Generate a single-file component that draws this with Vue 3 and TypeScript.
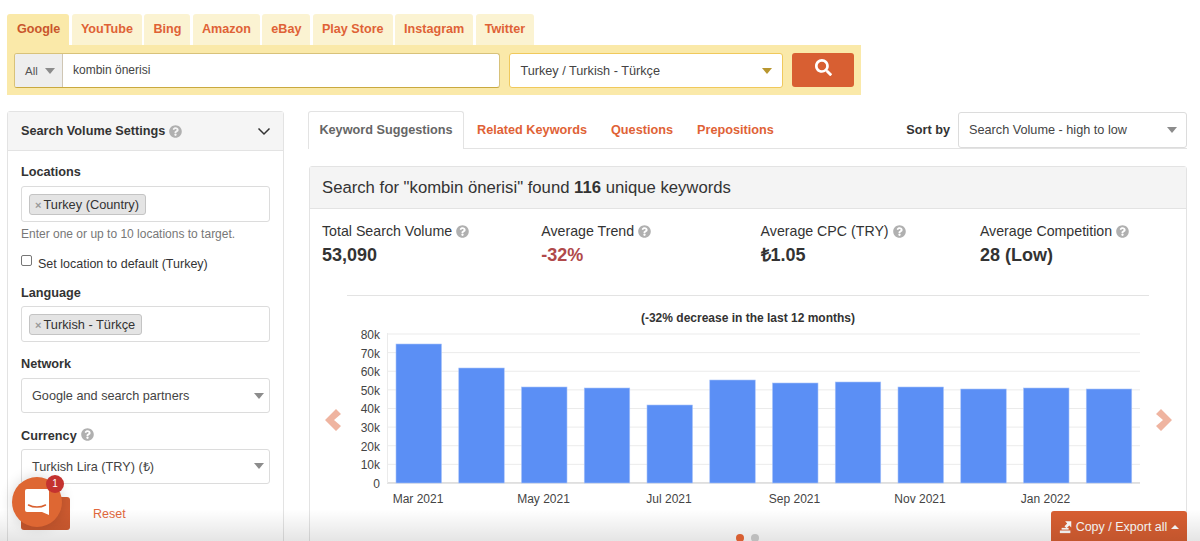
<template>
  <div class="page">
    <!-- Search box -->
    <div class="search-tabs">
      <a v-for="(t, i) in engines" :key="t" class="engine" :class="{ active: i === 0 }">{{ t }}</a>
    </div>
    <div class="search-bar">
      <div class="query-group">
        <span class="query-type">All <i class="caret caret-grey"></i></span>
        <span class="query-text">kombin önerisi</span>
      </div>
      <div class="lang-select">
        <span>Turkey / Turkish - Türkçe</span>
        <i class="caret caret-gold"></i>
      </div>
      <button class="search-btn">
        <svg width="17" height="17" viewBox="0 0 512 512" fill="#fff"><path :d="searchPath" /></svg>
      </button>
    </div>

    <div class="columns">
      <!-- Settings sidebar -->
      <aside class="settings">
        <div class="settings-head">
          <span>Search Volume Settings</span>
          <svg class="help" width="13" height="13" viewBox="0 0 512 512"><path :d="helpPath" /></svg>
          <svg class="chevron" width="14" height="9" viewBox="0 0 14 9" fill="none" stroke="#333" stroke-width="1.5"><polyline points="1.5,1.5 7,7 12.5,1.5" /></svg>
        </div>
        <div class="settings-body">
          <label class="field-label first">Locations</label>
          <div class="tag-input"><span class="tag"><b>×</b>Turkey (Country)</span></div>
          <p class="hint">Enter one or up to 10 locations to target.</p>
          <div class="check-row"><span class="checkbox"></span><span>Set location to default (Turkey)</span></div>
          <label class="field-label lang-label">Language</label>
          <div class="tag-input lang-input"><span class="tag"><b>×</b>Turkish - Türkçe</span></div>
          <label class="field-label net-label">Network</label>
          <div class="select side-select">Google and search partners<i class="caret caret-grey"></i></div>
          <label class="field-label cur-label">Currency <svg class="help" width="13" height="13" viewBox="0 0 512 512"><path :d="helpPath" /></svg></label>
          <div class="select side-select">Turkish Lira (TRY) (₺)<i class="caret caret-grey"></i></div>
          <div class="actions">
            <span class="apply"></span>
            <a class="reset">Reset</a>
          </div>
        </div>
      </aside>

      <main class="results">
        <div class="result-tabs">
          <a v-for="(t, i) in resultTabs" :key="t" class="result-tab" :class="{ active: i === 0 }">{{ t }}</a>
          <div class="sort">
            <strong>Sort by</strong>
            <div class="select sort-select">Search Volume - high to low<i class="caret caret-grey"></i></div>
          </div>
        </div>

        <section class="card">
          <div class="card-head">Search for "kombin önerisi" found <b>116</b> unique keywords</div>
          <div class="stats">
            <div v-for="s in stats" :key="s.label" class="stat">
              <div class="stat-label">
                {{ s.label }}
                <svg class="help" width="13" height="13" viewBox="0 0 512 512"><path :d="helpPath" /></svg>
              </div>
              <div class="stat-value" :class="{ down: s.down }">{{ s.value }}</div>
            </div>
          </div>
          <div class="chart-wrap">
            <div class="chart-title">(-32% decrease in the last 12 months)</div>
            <div class="chart-row">
              <svg class="arrow" width="16" height="22" viewBox="0 0 16 22"><polygon points="11,0 16,5 9,11 16,17 11,22 0,11" /></svg>
              <svg class="chart" width="810" height="180" viewBox="0 0 810 180">
                <g v-for="(g, i) in gridLines" :key="g">
                  <line :x1="41" :x2="794" :y1="g" :y2="g" :stroke="i === 8 ? '#c4c4c4' : '#ebebeb'" stroke-width="1" />
                  <text x="34" :y="g + 5" text-anchor="end" class="tick">{{ i === 8 ? '0' : (80 - i * 10) + 'k' }}</text>
                </g>
                <line x1="41.5" x2="41.5" y1="7" y2="157" stroke="#ebebeb" />
                <rect v-for="b in bars" :key="b.x" :x="b.x" :y="b.y" width="45.5" :height="b.h" fill="#5b8ff5" stroke="#a9c4f9" stroke-width="0.6" />
                <text v-for="m in months" :key="m.label" :x="m.x" y="177" text-anchor="middle" class="tick">{{ m.label }}</text>
              </svg>
              <svg class="arrow" width="16" height="22" viewBox="0 0 16 22"><polygon points="5,0 16,11 5,22 0,17 7,11 0,5" /></svg>
            </div>
          </div>
        </section>
      </main>
    </div>

    <!-- Things floating over the page -->
    <div class="fade"></div>
    <div class="pager"><span class="on"></span><span></span></div>
    <button class="export">
      <svg width="14" height="14" viewBox="0 0 16 15" fill="#fff">
        <rect x="1" y="11.5" width="12" height="3" />
        <rect x="3" y="8.5" width="8" height="2" />
        <path d="M7 1h7v7l-2.2-2.2L8.6 9 6.2 6.6 9.400 3.400z" />
      </svg>
      Copy / Export all <i class="caret caret-up"></i>
    </button>
    <div class="chat">
      <svg width="24" height="26" viewBox="0 0 24 26">
        <path d="M2 0h20a2 2 0 0 1 2 2v24l-7-3H2a2 2 0 0 1-2-2V2a2 2 0 0 1 2-2z" fill="#fff" />
        <path d="M3.500 16c5 2.800 12 2.800 17 0" fill="none" stroke="#d9602f" stroke-width="1.500" stroke-linecap="round" />
      </svg>
      <span class="chat-badge">1</span>
    </div>
  </div>
</template>

<script setup lang="ts">
const engines = ['Google', 'YouTube', 'Bing', 'Amazon', 'eBay', 'Play Store', 'Instagram', 'Twitter']
const resultTabs = ['Keyword Suggestions', 'Related Keywords', 'Questions', 'Prepositions']

const stats = [
  { label: 'Total Search Volume', value: '53,090', down: false },
  { label: 'Average Trend', value: '-32%', down: true },
  { label: 'Average CPC (TRY)', value: '₺1.05', down: false },
  { label: 'Average Competition', value: '28 (Low)', down: false },
]

const helpPath =
  'M504 256c0 136.997-111.043 248-248 248S8 392.997 8 256C8 119.083 119.043 8 256 8s248 111.083 248 248zM262.655 90c-54.497 0-89.255 22.957-116.549 63.758-3.536 5.286-2.353 12.415 2.715 16.258l34.699 26.31c5.205 3.947 12.621 3.008 16.665-2.122 17.864-22.658 30.113-35.797 57.303-35.797 20.429 0 45.698 13.148 45.698 32.958 0 14.976-12.363 22.667-32.534 33.976C247.128 238.528 216 254.941 216 296v4c0 6.627 5.373 12 12 12h56c6.627 0 12-5.373 12-12v-1.333c0-28.462 83.186-29.647 83.186-106.667 0-58.002-60.165-102-116.531-102zM256 338c-25.365 0-46 20.635-46 46 0 25.364 20.635 46 46 46s46-20.636 46-46c0-25.365-20.635-46-46-46z'
const searchPath =
  'M505 442.7L405.3 343c-4.5-4.5-10.6-7-17-7H372c27.6-35.3 44-79.7 44-128C416 93.1 322.9 0 208 0S0 93.1 0 208s93.1 208 208 208c48.3 0 92.7-16.4 128-44v16.3c0 6.4 2.5 12.5 7 17l99.7 99.7c9.4 9.4 24.6 9.4 33.9 0l28.3-28.3c9.4-9.4 9.4-24.6.1-34zM208 336c-70.7 0-128-57.2-128-128 0-70.7 57.2-128 128-128 70.7 0 128 57.2 128 128 0 70.7-57.2 128-128 128z'

// chart geometry: y=157 is zero, 18.62px for each 10k
const gridLines = Array.from({ length: 9 }, (_, i) => 8 + i * 18.62)
const tops = [18, 42, 61, 62, 79, 54, 57, 56, 61, 63, 62, 63]
const bars = tops.map((y, i) => ({ x: 50 + i * 62.75, y, h: 157 - y }))
const months = ['Mar 2021', 'May 2021', 'Jul 2021', 'Sep 2021', 'Nov 2021', 'Jan 2022'].map((label, i) => ({
  label,
  x: 72 + i * 125.5,
}))
</script>

<style scoped>
.page {
  position: relative;
  width: 1200px;
  height: 541px;
  overflow: hidden;
  background: #fff;
  color: #333;
  font-family: "Liberation Sans", Arial, sans-serif;
  font-size: 13px;
  padding-top: 14px;
  box-sizing: border-box;
}

.search-tabs { display: flex; gap: 2.500px; margin-left: 7px; height: 31px; }
.engine {
  padding: 0 9px;
  line-height: 31px;
  background: #fbf3d2;
  color: #df6236;
  font-size: 12.600px;
  font-weight: bold;
  border-radius: 3px 3px 0 0;
}
.engine.active { background: #fae9a9; color: #c9562c; padding: 0 9px 0 10px; }

.search-bar {
  display: flex;
  width: 854px;
  height: 50px;
  margin-left: 7px;
  padding: 8px 7px 0 7px;
  box-sizing: border-box;
  background: #fae9a9;
  align-items: flex-start;
}
.query-group {
  display: flex;
  width: 487px;
  height: 35px;
  box-sizing: border-box;
  background: #fff;
  border: 1px solid #d8c27a;
  border-bottom-color: #c9a93f;
  border-radius: 3px;
  overflow: hidden;
  font-size: 12px;
}
.query-type {
  display: flex;
  align-items: center;
  gap: 7px;
  width: 48px;
  padding-left: 10px;
  box-sizing: border-box;
  background: #eee;
  border-right: 1px solid #cfc6b4;
  color: #555;
  font-size: 11.500px;
}
.query-text { line-height: 33px; padding-left: 10px; color: #444; }

.lang-select {
  display: flex;
  align-items: center;
  justify-content: space-between;
  width: 274px;
  height: 35px;
  margin-left: 9px;
  padding: 0 10px;
  box-sizing: border-box;
  background: #fff;
  border: 1px solid #f0c95c;
  border-radius: 3px;
  font-size: 12.700px;
  color: #444;
}
.search-btn {
  width: 62px;
  height: 34px;
  margin-left: 9px;
  padding: 0 0 2px;
  background: #d85f32;
  border: 0;
  border-radius: 3px;
}

.caret { display: inline-block; width: 0; height: 0; border-style: solid; border-color: transparent; border-width: 6px 5.500px 0; }
.caret-grey { border-top-color: #8c8c8c; }
.caret-gold { border-top-color: #b8962f; }
.caret-up { border-width: 0 4px 4px; border-bottom-color: #fff; margin-left: 1px; }

.columns { display: flex; align-items: flex-start; margin-top: 16px; }

/* Sidebar */
.settings {
  width: 277px;
  height: 460px;
  margin-left: 7px;
  box-sizing: border-box;
  border: 1px solid #e3e3e3;
  border-radius: 3px 3px 0 0;
}
.settings-head {
  display: flex;
  align-items: center;
  height: 38px;
  padding: 0 12px 0 13px;
  background: #f5f5f5;
  border-bottom: 1px solid #e3e3e3;
  font-size: 12.700px;
  font-weight: bold;
}
.settings-head .help { margin-left: 4px; }
.chevron { margin-left: auto; }
.help { fill: #b0b0b0; vertical-align: -1.500px; }

.settings-body { padding: 0 13px; }
.field-label { display: block; font-size: 12.700px; font-weight: bold; line-height: 14px; }
.first { margin-top: 14px; }
.lang-label { margin-top: 14px; }
.net-label { margin-top: 15px; }
.cur-label { margin-top: 15px; }
.cur-label .help { margin-left: 1px; }
.tag-input {
  height: 36px;
  width: 249px;
  margin-top: 7px;
  padding: 7px;
  box-sizing: border-box;
  border: 1px solid #dcdcdc;
  border-radius: 3px;
}
.lang-input { margin-top: 6px; }
.tag {
  display: inline-block;
  height: 21px;
  line-height: 20px;
  padding: 0 6px 0 5px;
  box-sizing: border-box;
  background: #e4e4e4;
  border: 1px solid #c4c4c4;
  border-radius: 3px;
  font-size: 12.800px;
}
.tag b { color: #999; margin-right: 2px; font-size: 11px; }
.hint { margin: 5px 0 0; font-size: 12px; line-height: 14px; color: #777; }
.check-row { display: flex; font-size: 12.500px; line-height: 15px; margin-top: 16px; gap: 6px; height: 15px; }
.checkbox {
  width: 11px;
  height: 11px;
  box-sizing: border-box;
  border: 1px solid #767676;
  border-radius: 2px;
  margin-top: -2px;
  flex-shrink: 0;
}
.select {
  display: flex;
  align-items: center;
  justify-content: space-between;
  box-sizing: border-box;
  border: 1px solid #dcdcdc;
  border-radius: 3px;
  background: #fff;
  color: #444;
  font-size: 12.700px;
}
.side-select { width: 249px; height: 35px; margin-top: 7px; padding: 0 5px 0 10px; }
.cur-label + .side-select { margin-top: 6px; }
.actions { display: flex; align-items: center; margin-top: 13px; }
.apply { width: 49px; height: 33px; background: #cf5b30; border-radius: 3px; }
.reset { margin-left: 23px; padding-top: 1px; color: #e2673c; font-size: 12.500px; }

/* Results */
.results { width: 878px; margin-left: 25px; }
.result-tabs {
  display: flex;
  align-items: flex-end;
  height: 37px;
  border-bottom: 1px solid #e3e3e3;
  position: relative;
  font-size: 12.700px;
  font-weight: bold;
}
.result-tab {
  color: #df6236;
  line-height: 36px;
  margin-left: 24px;
}
.result-tab.active {
  width: 156px;
  height: 38px;
  margin: 0 -11px -1px -1px;
  box-sizing: border-box;
  text-align: center;
  line-height: 37px;
  color: #666;
  background: #fff;
  border: 1px solid #e3e3e3;
  border-bottom: 0;
  border-radius: 3px 3px 0 0;
}
.sort { display: flex; align-items: center; gap: 8px; margin-left: auto; height: 37px; color: #333; }
.sort strong { font-size: 12.700px; }
.sort-select { width: 229px; height: 36px; font-weight: normal; padding: 0 9px 0 10px; }

.card {
  margin-top: 17px;
  width: 878px;
  height: 400px;
  box-sizing: border-box;
  border: 1px solid #e3e3e3;
  border-radius: 3px 3px 0 0;
}
.card-head {
  height: 41px;
  line-height: 41px;
  padding-left: 12px;
  background: #f4f4f4;
  border-bottom: 1px solid #e3e3e3;
  font-size: 16.700px;
}
.stats { display: grid; grid-template-columns: repeat(4, 219.300px); padding: 14px 0 0 12px; height: 72px; box-sizing: content-box; }
.stat-label { font-size: 14.200px; line-height: 17px; }
.stat-value { font-size: 18px; font-weight: bold; line-height: 22px; margin-top: 4px; }
.stat-value.down { color: #b0494a; }

.chart-wrap { margin: 0 37px; border-top: 1px solid #e3e3e3; }
.chart-title { margin-top: 15px; text-align: center; font-size: 12px; font-weight: bold; line-height: 14px; }
.chart-row { display: flex; align-items: center; margin: 1px -22px 0; }
.chart { margin-left: 5px; flex-shrink: 0; }
.arrow { fill: #efb4a0; flex-shrink: 0; margin-top: 8px; }
.tick { font-size: 12px; fill: #444; font-family: "Liberation Sans", Arial, sans-serif; }

/* Overlays */
.fade {
  position: absolute;
  left: 0;
  right: 0;
  bottom: 0;
  height: 32px;
  background: linear-gradient(rgba(0, 0, 0, 0), rgba(0, 0, 0, 0.1));
  pointer-events: none;
  z-index: 2;
}
.pager { position: absolute; left: 736px; top: 534px; display: flex; gap: 7px; z-index: 3; }
.pager span { width: 8px; height: 8px; border-radius: 50%; background: #bdbdbd; }
.pager .on { background: #d85f32; }
.export {
  position: absolute;
  left: 1051px;
  top: 511px;
  width: 136px;
  height: 34px;
  padding: 0 0 2px;
  background: #d85f32;
  border: 0;
  border-radius: 3px 3px 0 0;
  color: #fff;
  font-family: inherit;
  font-size: 12.500px;
  display: flex;
  align-items: center;
  justify-content: center;
  gap: 3px;
  z-index: 1;
}
.chat {
  position: absolute;
  left: 12px;
  top: 477px;
  width: 50px;
  height: 50px;
  border-radius: 50%;
  background: #de6733;
  box-shadow: 0 0 14px rgba(0, 0, 0, 0.16);
  display: flex;
  align-items: center;
  justify-content: center;
  z-index: 4;
}
.chat-badge {
  position: absolute;
  left: 34px;
  top: -2px;
  width: 18px;
  height: 18px;
  border-radius: 50%;
  background: #c4322f;
  color: #fff;
  font-size: 10px;
  line-height: 18px;
  text-align: center;
}
</style>

<style>
html, body { margin: 0; overflow: hidden; }
</style>
